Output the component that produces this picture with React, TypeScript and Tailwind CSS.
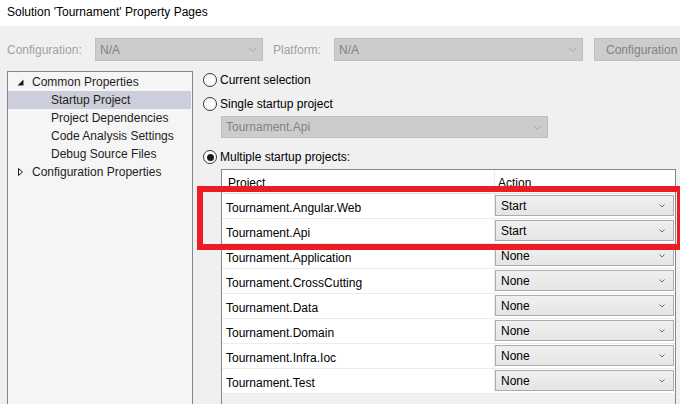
import { ReactNode } from "react";

// ============================================
// Data
// ============================================

type TreeItem = {
  label: string;
  level: 0 | 1;
  expanded?: boolean;
  selected?: boolean;
};

const treeItems: TreeItem[] = [
  { label: "Common Properties", level: 0, expanded: true },
  { label: "Startup Project", level: 1, selected: true },
  { label: "Project Dependencies", level: 1 },
  { label: "Code Analysis Settings", level: 1 },
  { label: "Debug Source Files", level: 1 },
  { label: "Configuration Properties", level: 0, expanded: false },
];

const projects = [
  { name: "Tournament.Angular.Web", action: "Start" },
  { name: "Tournament.Api", action: "Start" },
  { name: "Tournament.Application", action: "None" },
  { name: "Tournament.CrossCutting", action: "None" },
  { name: "Tournament.Data", action: "None" },
  { name: "Tournament.Domain", action: "None" },
  { name: "Tournament.Infra.Ioc", action: "None" },
  { name: "Tournament.Test", action: "None" },
];

// ============================================
// Small pieces
// ============================================

function BigChevron() {
  return (
    <svg width="9" height="5" viewBox="0 0 9 5" className="text-[#a6a6a6]">
      <path d="M0.5 0.5 L4.5 4.5 L8.5 0.5" fill="none" stroke="currentColor" strokeWidth="1" />
    </svg>
  );
}

function SmallChevron() {
  return (
    <svg width="6" height="4" viewBox="0 0 6 4" className="text-[#6b6b6b]">
      <path d="M0.5 0.5 L3 3 L5.5 0.5" fill="none" stroke="currentColor" strokeWidth="1" />
    </svg>
  );
}

function DisabledCombo({ value, className }: { value: string; className: string }) {
  return (
    <div
      className={`flex items-center justify-between border border-[#bfbfbf] bg-[#cccccc] pl-[4px] pr-[5px] text-[#838383] ${className}`}
    >
      <span>{value}</span>
      <BigChevron />
    </div>
  );
}

function Radio({ checked, children }: { checked?: boolean; children: ReactNode }) {
  return (
    <div className="flex h-[18px] items-center">
      <span className="flex h-[14px] w-[14px] items-center justify-center rounded-full border border-[#333333] bg-white">
        {checked && <span className="h-[7px] w-[7px] rounded-full bg-[#1c1c1c]" />}
      </span>
      <span className="ml-[3px] text-black">{children}</span>
    </div>
  );
}

function TreeRow({ item }: { item: TreeItem }) {
  return (
    <div
      className={`mr-[1px] flex h-[18px] items-center ${
        item.selected ? "bg-[#cccedb]" : ""
      } ${item.level === 0 ? "pl-[9px]" : "pl-[43px]"}`}
    >
      {item.level === 0 && (
        <span className="flex w-[15px] items-center">
          {item.expanded ? (
            <svg width="7" height="7" viewBox="0 0 7 7">
              <path d="M6.5 0.5 L6.5 6.5 L0.5 6.5 Z" fill="#1e1e1e" />
            </svg>
          ) : (
            <svg width="7" height="8" viewBox="0 0 7 8">
              <path d="M1.5 0.5 L5.5 4 L1.5 7.5 Z" fill="none" stroke="#1e1e1e" strokeWidth="1" />
            </svg>
          )}
        </span>
      )}
      <span className="text-[#1e1e1e]">{item.label}</span>
    </div>
  );
}

// ============================================
// App
// ============================================

export default function App() {
  return (
    <div className="relative h-[404px] w-[680px] overflow-hidden bg-[#f0f0f0] font-['Segoe_UI','Liberation_Sans',sans-serif] text-[12px] leading-[14px]">
      {/* Title */}
      <div className="flex h-[24px] items-center bg-white pl-[7px] text-black">
        Solution 'Tournament' Property Pages
      </div>
      <div className="h-[2px] bg-white" />

      {/* Configuration / Platform row */}
      <div className="mt-[12px] flex h-[23px] items-center whitespace-nowrap">
        <span className="w-[95px] shrink-0 pl-[7px] text-[#a0a0a0]">Configuration:</span>
        <DisabledCombo value="N/A" className="h-[23px] w-[168px] shrink-0" />
        <span className="ml-[10px] w-[61px] shrink-0 text-[#a0a0a0]">Platform:</span>
        <DisabledCombo value="N/A" className="h-[23px] w-[249px] shrink-0" />
        <div className="ml-[11px] flex h-[23px] w-[100px] shrink-0 items-center border border-[#bfbfbf] bg-[#cccccc] pl-[11px] text-[#838383]">
          Configuration
        </div>
      </div>

      {/* Main */}
      <div className="mt-[10px] flex">
        {/* Tree */}
        <div className="ml-[7px] h-[340px] w-[186px] shrink-0 border border-[#828790] bg-[#f5f5f5] pt-[1px]">
          {treeItems.map((item) => (
            <TreeRow key={item.label} item={item} />
          ))}
        </div>

        {/* Startup options */}
        <div className="ml-[10px] flex w-[480px] flex-col">
          <Radio>Current selection</Radio>
          <div className="mt-[6px]">
            <Radio>Single startup project</Radio>
          </div>
          <DisabledCombo value="Tournament.Api" className="ml-[18px] mt-[3px] h-[22px] w-[327px]" />
          <div className="mt-[10px]">
            <Radio checked>Multiple startup projects:</Radio>
          </div>

          {/* Grid */}
          <div className="ml-[18px] mt-[3px] h-[260px] w-[455px] border border-[#828790] bg-[#f0f0f0]">
            <div className="flex h-[24px] border-b border-[#e3e3e3] bg-white">
              <div className="w-[273px] border-r border-[#ececec] pl-[6px] pt-[6px]">Project</div>
              <div className="flex-1 pl-[3px] pt-[6px]">Action</div>
            </div>
            {projects.map((p) => (
              <div key={p.name} className="flex h-[25px] border-b border-[#ececec] bg-white">
                <div className="flex w-[273px] items-center border-r border-[#ececec] pl-[4px] pt-[3px] text-black">
                  {p.name}
                </div>
                <div className="flex-1 pr-[1px] pt-[1px]">
                  <div className="flex h-[21px] items-center justify-between border border-[#acacac] bg-gradient-to-b from-[#f0f0f0] to-[#e5e5e5] pl-[5px] pr-[8px] text-black">
                    <span className="pt-[1px]">{p.action}</span>
                    <SmallChevron />
                  </div>
                </div>
              </div>
            ))}
          </div>
        </div>
      </div>

      {/* Red annotation box */}
      <div className="absolute left-[197px] top-[186px] h-[64px] w-[486px] border-[6px] border-[#ed1c24]" />
    </div>
  );
}
